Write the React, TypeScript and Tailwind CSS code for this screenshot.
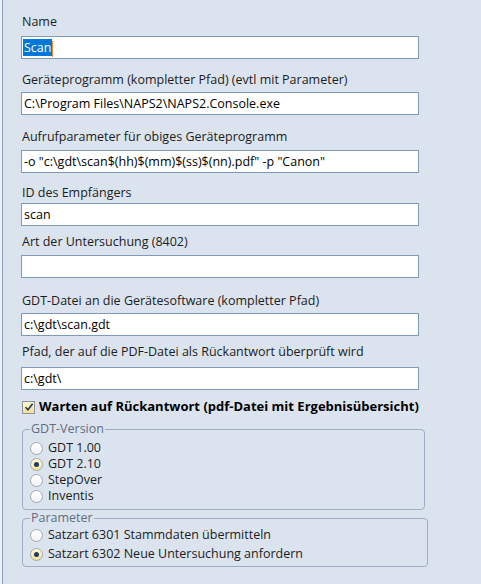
import type { ReactNode } from "react";

const font = { fontFamily: '"Open Sans", "Noto Sans", sans-serif' };

function Field({
  label,
  value,
  mt,
  gap,
  children,
}: {
  label: string;
  value?: string;
  mt: string;
  gap: string;
  children?: ReactNode;
}) {
  return (
    <div className={mt}>
      <div className="h-[16px] leading-[16px] pl-[1px] text-[#1c1c22]">{label}</div>
      <div
        className={`${gap} h-[23px] w-[398px] border border-[#8199b8] bg-white leading-[21px] pl-[2px] text-black whitespace-nowrap overflow-hidden`}
      >
        {children ?? value}
      </div>
    </div>
  );
}

function Radio({ checked, label }: { checked?: boolean; label: string }) {
  return (
    <div className="flex items-center h-[16px]">
      <span
        className={`flex items-center justify-center w-[13px] h-[13px] rounded-full border border-[#a3a9b3] ${
          checked ? "bg-gradient-to-b from-[#fff8d8] to-[#f3e29a]" : "bg-gradient-to-b from-white to-[#f1f3f6]"
        }`}
      >
        {checked && <span className="w-[5px] h-[5px] rounded-full bg-[#233a66]" />}
      </span>
      <span className="ml-[5px] text-[#1c1c22]">{label}</span>
    </div>
  );
}

export default function App() {
  return (
    <div className="flex w-[481px] h-[584px] bg-[#dbe4ee] text-[12.5px]" style={font}>
      {/* panel edge */}
      <div className="w-[2px] bg-[#eaf0f6]" />
      <div className="w-px bg-[#8ea2bc]" />
      <div className="flex-1 pl-[18px]">
        <Field label="Name" mt="mt-[14px]" gap="mt-[6px]">
          <span className="inline-flex items-center h-[17px] bg-[#0078d7] text-white px-[1px] -ml-[1px] leading-[17px]">
            Scan
          </span>
          <span className="inline-block align-middle w-px h-[16px] bg-[#f08a24]" />
        </Field>
        <Field
          label="Geräteprogramm (kompletter Pfad) (evtl mit Parameter)"
          value="C:\Program Files\NAPS2\NAPS2.Console.exe"
          mt="mt-[13px]"
          gap="mt-[4px]"
        />
        <Field
          label="Aufrufparameter für obiges Geräteprogramm"
          value={'-o "c:\\gdt\\scan$(hh)$(mm)$(ss)$(nn).pdf" -p "Canon"'}
          mt="mt-[14px]"
          gap="mt-[5px]"
        />
        <Field label="ID des Empfängers" value="scan" mt="mt-[12px]" gap="mt-[2px]" />
        <Field label="Art der Untersuchung (8402)" value="" mt="mt-[8px]" gap="mt-[5px]" />
        <Field
          label="GDT-Datei an die Gerätesoftware (kompletter Pfad)"
          value="c:\gdt\scan.gdt"
          mt="mt-[15px]"
          gap="mt-[4px]"
        />
        <Field
          label="Pfad, der auf die PDF-Datei als Rückantwort überprüft wird"
          value="c:\gdt\"
          mt="mt-[8px]"
          gap="mt-[7px]"
        />

        <div className="mt-[9px] flex items-center h-[16px] pl-[1px]">
          <span className="flex items-center justify-center w-[13px] h-[13px] border border-[#8e949c] bg-gradient-to-b from-[#fff8d6] to-[#f1df93]">
            <svg width="10" height="10" viewBox="0 0 10 10">
              <path d="M1.5 5.2 L4 7.8 L8.6 1.8" fill="none" stroke="#26344f" strokeWidth="1.6" />
            </svg>
          </span>
          <span className="ml-[4px] text-[13px] font-bold text-black">
            Warten auf Rückantwort (pdf-Datei mit Ergebnisübersicht)
          </span>
        </div>

        <fieldset className="mt-[6px] ml-[1px] w-[403px] border border-[#9cadc4] rounded-[4px] pl-[7px] pb-[5px]">
          <legend className="px-[1px] leading-[16px] text-[#5f6e84]">GDT-Version</legend>
          <div className="mt-[3px] flex flex-col">
            <Radio label="GDT 1.00" />
            <Radio checked label="GDT 2.10" />
            <Radio label="StepOver" />
            <Radio label="Inventis" />
          </div>
        </fieldset>

        <fieldset className="mt-0 ml-[1px] w-[406px] border border-[#9cadc4] rounded-[4px] pl-[7px] pb-[4px]">
          <legend className="px-[1px] leading-[16px] text-[#5f6e84]">Parameter</legend>
          <div className="mt-[1px] flex flex-col gap-[3px]">
            <Radio label="Satzart 6301 Stammdaten übermitteln" />
            <Radio checked label="Satzart 6302 Neue Untersuchung anfordern" />
          </div>
        </fieldset>
      </div>
    </div>
  );
}
